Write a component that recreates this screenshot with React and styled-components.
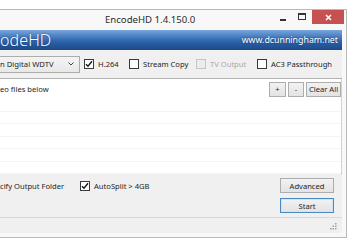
import React from "react";
import styled, { createGlobalStyle } from "styled-components";

const GlobalStyle = createGlobalStyle`
  html, body {
    margin: 0;
    padding: 0;
    background: #ffffff;
    overflow: hidden;
  }
  body {
    font-family: "Noto Sans", "Open Sans", sans-serif;
    color: #1e1e1e;
  }
`;

const Page = styled.div`
  width: 359px;
  height: 250px;
  overflow: hidden;
  padding-top: 9px;
  box-sizing: border-box;
`;

// the window runs off the left edge of the shot, so no left frame is drawn
const Window = styled.div`
  width: 347px;
  background: #f8f8f8;
  border: 1px solid #b9b9b9;
  border-left: none;
  padding: 0 4px 4px 0;
  box-sizing: border-box;
`;

const TitleBar = styled.div`
  display: flex;
  align-items: flex-start;
  height: 20px;
  margin-right: -4px;
`;

const Title = styled.div`
  flex: 1;
  padding-left: 105px;
  font-size: 9.6px;
  line-height: 20px;
  color: #2b2b2b;
  white-space: nowrap;
`;

const Controls = styled.div`
  display: flex;
  margin-right: 2px;
`;

const CtlButton = styled.div`
  width: ${(p) => p.$w}px;
  height: 14px;
  display: flex;
  align-items: center;
  justify-content: center;
  background: ${(p) => (p.$close ? "#c75050" : "transparent")};
`;

const Banner = styled.div`
  height: 20px;
  display: flex;
  align-items: center;
  justify-content: space-between;
  padding: 0 4px 0 0;
  background: linear-gradient(
    #7aa6dc 0%,
    #4d82c4 30%,
    #2f66ad 55%,
    #24589c 75%,
    #1d4a88 100%
  );
  color: #ffffff;
`;

const AppName = styled.span`
  font-size: 16px;
  font-weight: 300;
  letter-spacing: 0.1px;
  text-shadow: 0 0 2px rgba(0, 30, 80, 0.6);
`;

const Site = styled.span`
  font-size: 8.8px;
  text-shadow: 0 0 2px rgba(0, 30, 80, 0.7);
`;

const Toolbar = styled.div`
  height: 28px;
  display: flex;
  align-items: center;
  background: #f0f0f0;
  border-bottom: 1px solid #b4b4b4;
`;

const Select = styled.div`
  width: 80px;
  height: 17px;
  box-sizing: border-box;
  border: 1px solid #acacac;
  border-left: none;
  background: linear-gradient(#f4f4f4, #e8e8e8);
  display: flex;
  align-items: center;
  justify-content: space-between;
  padding: 0 5px 0 0;
  font-size: 7.7px;
  margin-right: 4px;
  white-space: nowrap;
`;

const Option = styled.label`
  width: ${(p) => p.$w}px;
  display: flex;
  align-items: center;
  gap: 4px;
  font-size: 7.6px;
  white-space: nowrap;
  color: ${(p) => (p.$disabled ? "#a8a8a8" : "#1e1e1e")};
  flex-shrink: 0;
`;

const Box = styled.span`
  width: 10px;
  height: 10px;
  box-sizing: border-box;
  border: 1px solid ${(p) => (p.$disabled ? "#c6c6c6" : "#3a3a3a")};
  background: ${(p) => (p.$disabled ? "#ececec" : "#ffffff")};
  display: flex;
  align-items: center;
  justify-content: center;
  flex-shrink: 0;
`;

const List = styled.div`
  height: 94px;
  background: #ffffff;
  border-right: 1px solid #d2d2d2;
  display: flex;
  flex-direction: column;
`;

const ListHead = styled.div`
  height: 20px;
  display: flex;
  align-items: center;
  justify-content: space-between;
  font-size: 7.6px;
  flex-shrink: 0;
`;

const Small = styled.div`
  display: flex;
  gap: 2px;
`;

const Button = styled.div`
  width: ${(p) => p.$w}px;
  height: 15px;
  box-sizing: border-box;
  border: 1px solid ${(p) => (p.$default ? "#4a8ac4" : "#adadad")};
  box-shadow: ${(p) => (p.$default ? "inset 0 0 0 1px #cde6f7" : "none")};
  background: linear-gradient(#f2f2f2, #e3e3e3);
  display: flex;
  align-items: center;
  justify-content: center;
  font-size: 7.6px;
  white-space: nowrap;
  color: #1e1e1e;
`;

const Row = styled.div`
  height: 11.5px;
  flex-shrink: 0;
  border-bottom: 1px solid #f3f3f3;
`;

const Bottom = styled.div`
  height: 44px;
  background: #f0f0f0;
  border-top: 1px solid #bdbdbd;
  display: flex;
  justify-content: space-between;
  padding: 4px 8px 0 0;
  box-sizing: border-box;
`;

const Checks = styled.div`
  display: flex;
  align-items: center;
  height: 16px;
`;

const Label = styled.span`
  width: ${(p) => p.$w}px;
  font-size: 7.6px;
  white-space: nowrap;
`;

const Buttons = styled.div`
  display: flex;
  flex-direction: column;
  gap: 5px;
`;

const Status = styled.div`
  height: 16px;
  box-sizing: border-box;
  background: #f0f0f0;
  border-top: 1px solid #d9d9d9;
  display: flex;
  justify-content: flex-end;
  align-items: center;
  padding: 2px 5px 0 0;
`;

const Check = ({ on, disabled }) => (
  <Box $disabled={disabled}>
    {on && (
      <svg width="8" height="8" viewBox="0 0 8 8">
        <path d="M1 4.2 L3 6.3 L7 1.3" fill="none" stroke="#1a1a1a" strokeWidth="1.4" />
      </svg>
    )}
  </Box>
);

export default function App() {
  return (
    <Page>
      <GlobalStyle />
      <Window>
        <TitleBar>
          <Title>EncodeHD 1.4.150.0</Title>
          <Controls>
            <CtlButton $w={18}>
              <svg width="7" height="8" viewBox="0 0 7 8">
                <rect x="0" y="6" width="6" height="2" fill="#333" />
              </svg>
            </CtlButton>
            <CtlButton $w={20}>
              <svg width="8" height="8" viewBox="0 0 8 8">
                <rect x="0.5" y="0.5" width="7" height="6" fill="none" stroke="#333" />
                <rect x="0" y="0" width="8" height="2" fill="#333" />
              </svg>
            </CtlButton>
            <CtlButton $w={32} $close>
              <svg width="7" height="7" viewBox="0 0 7 7">
                <path d="M1 1 L6 6 M6 1 L1 6" stroke="#fff" strokeWidth="1.5" />
              </svg>
            </CtlButton>
          </Controls>
        </TitleBar>

        <Banner>
          <AppName>odeHD</AppName>
          <Site>www.dcunningham.net</Site>
        </Banner>

        <Toolbar>
          <Select>
            <span>n Digital WDTV</span>
            <svg width="6" height="4" viewBox="0 0 6 4">
              <path d="M0.5 0.5 L3 3 L5.5 0.5" fill="none" stroke="#444" strokeWidth="1" />
            </svg>
          </Select>
          <Option $w={45}>
            <Check on />
            H.264
          </Option>
          <Option $w={67}>
            <Check />
            Stream Copy
          </Option>
          <Option $w={61} $disabled>
            <Check disabled />
            TV Output
          </Option>
          <Option $w={78}>
            <Check />
            AC3 Passthrough
          </Option>
        </Toolbar>

        <List>
          <ListHead>
            <span>eo files below</span>
            <Small>
              <Button $w={17}>+</Button>
              <Button $w={16}>-</Button>
              <Button $w={35}>Clear All</Button>
            </Small>
          </ListHead>
          {Array.from({ length: 6 }).map((_, i) => (
            <Row key={i} />
          ))}
        </List>

        <Bottom>
          <Checks>
            <Label $w={80}>cify Output Folder</Label>
            <Option $w={80}>
              <Check on />
              AutoSplit &gt; 4GB
            </Option>
          </Checks>
          <Buttons>
            <Button $w={54}>Advanced</Button>
            <Button $w={54} $default>
              Start
            </Button>
          </Buttons>
        </Bottom>

        <Status>
          <svg width="7" height="7" viewBox="0 0 7 7">
            <g fill="#a0a0a0">
              <rect x="5" y="0" width="1.5" height="1.5" />
              <rect x="2.5" y="2.5" width="1.5" height="1.5" />
              <rect x="5" y="2.5" width="1.5" height="1.5" />
              <rect x="0" y="5" width="1.5" height="1.5" />
              <rect x="2.5" y="5" width="1.5" height="1.5" />
              <rect x="5" y="5" width="1.5" height="1.5" />
            </g>
          </svg>
        </Status>
      </Window>
    </Page>
  );
}
